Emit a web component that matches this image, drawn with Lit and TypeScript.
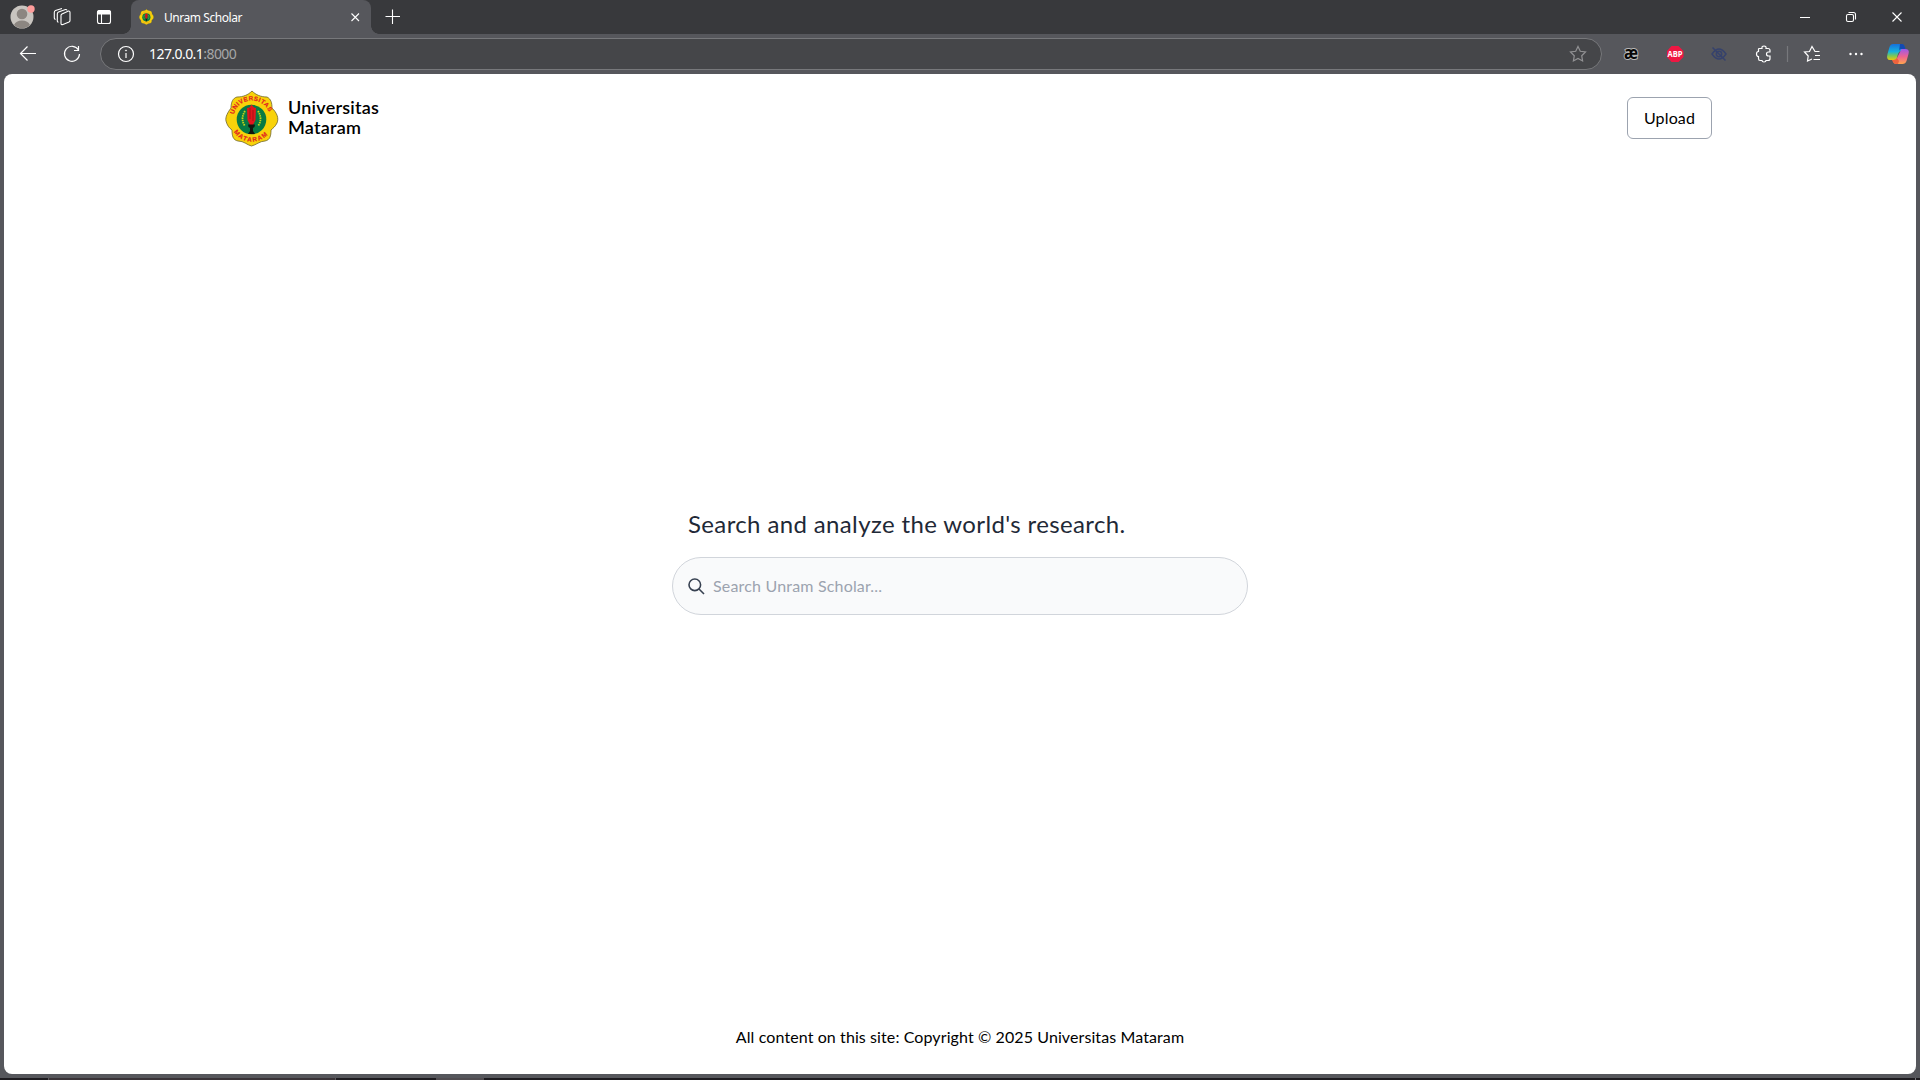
import { LitElement, html, css, svg } from "lit";
import { customElement } from "lit/decorators.js";

const emblem = (lettering: boolean) => svg`
  <path d="M27 1 C31 5 36 7 42 7 C46 9 47 13 47 18 C52 23 54 28 52 33 C50 37 48 38 46 40 C46 46 45 50 40 51 C35 51 31 55 26.500 56 C22 55 19 51 13 51 C8 50 7 46 7 40 C4 38 2 35 1 31 C0 27 3 22 6 18 C6 12 8 8 12 7 C18 7 23 5 27 1Z" fill="#f8d20a" stroke="#6d642b" stroke-width=".8"/>
  <circle cx="26.500" cy="29.500" r="14.800" fill="#087a43" stroke="none"/>
  <path d="M20 21 Q15 29 20 36 M33 21 Q38 29 33 36" fill="none" stroke="#c6d51b" stroke-width="1.800" stroke-dasharray="1.5 .8"/>
  <path d="M26.500 14.500 L29 17.500 L31 18 L30.500 30 L28 35 H25 L22.500 30 L22 18 L24.500 17.500Z" fill="#e3151d" stroke="none"/>
  <path d="M25 18 V29 M28 20 V31" stroke="#8a1513" stroke-width=".7"/>
  <path d="M23 34.500 H30 L29.500 37 L28 38 V41 L30 44 H23 L25 41 V38 L23.500 37Z" fill="#15150f" stroke="none"/>
  ${lettering ? svg`
    <path id="upper" d="M8.800 24.500 A18.500 18.500 0 0 1 44.700 24.500" fill="none"/>
    <path id="lower" d="M8.800 42 A21.500 21.500 0 0 0 44.800 42" fill="none"/>
    <text class="ring"><textPath href="#upper" textLength="46">UNIVERSITAS</textPath></text>
    <text class="ring"><textPath href="#lower" textLength="39">MATARAM</textPath></text>` : svg`
    <path d="M9 22 A19 19 0 0 1 44 22 M13 44 A20 20 0 0 0 40 44" fill="none" stroke="#e8981a" stroke-width="3" stroke-dasharray="3 1.500"/>`}
`;

@customElement("browser-tabs")
class BrowserTabs extends LitElement {
  static styles = css`
    :host { display: flex; height: 34px; background: #38393c; color: #fff; font: 12px "Noto Sans", "Open Sans", sans-serif; }
    svg { display: block; fill: none; stroke: #fff; stroke-width: 1.1; }
    .tools { width: 131px; }
    .tab { width: 240px; box-sizing: border-box; background: #56575c; border-radius: 8px 8px 0 0; display: flex; align-items: center; padding: 0 8px 0 8px; position: relative; }
    .tab::before, .tab::after { content: ""; position: absolute; bottom: 0; width: 8px; height: 8px; }
    .tab::before { left: -8px; background: radial-gradient(circle at 0 0, #38393c 7.500px, #56575c 8px); }
    .tab::after { right: -8px; background: radial-gradient(circle at 100% 0, #38393c 7.500px, #56575c 8px); }
    .title { flex: 1; padding-left: 10px; white-space: nowrap; letter-spacing: -.45px; }
    .windows { margin-left: auto; }
  `;
  render() {
    return html`
      <svg class="tools" viewBox="0 0 131 34" height="34">
        <circle cx="22" cy="17" r="11.500" fill="#c9c5c0" stroke="none"/>
        <circle cx="22" cy="14" r="5.300" fill="#8c8681" stroke="none"/>
        <path d="M14 25 Q16 20.500 22 20.500 Q28 20.500 30 25 Q26.500 28.300 22 28.300 Q17.500 28.300 14 25Z" fill="#8c8681" stroke="none"/>
        <circle cx="31" cy="9" r="3.700" fill="#ff9d9b" stroke="none"/>
        <path d="M61 15.500 Q61 14.500 62 14 L68.500 11 Q70 10.800 70 12.500 V20.500 Q70 21.500 69 22 L63 24.500 Q61 25 61 23.500Z"/>
        <path d="M58.500 22.300 Q57.300 22 57.300 21 V14 Q57.300 12.500 58.500 12 L65.500 9.500 Q66.700 9.200 67 10.500"/>
        <path d="M55.500 19.500 Q54.300 19 54.300 18 V12.500 Q54.300 11 55.500 10.500 L62 8.500"/>
        <rect x="97.500" y="10.500" width="13" height="13" rx="2"/>
        <path d="M97.500 14 V12.500 Q97.500 10.500 99.500 10.500 H108.500 Q110.500 10.500 110.500 12.500 V14Z" fill="#fff"/>
        <path d="M101.500 14 V23.500"/>
      </svg>
      <div class="tab">
        <svg width="15" height="16" viewBox="0 0 54 57">${emblem(false)}</svg>
        <span class="title">Unram Scholar</span>
        <svg width="15" height="16" viewBox="0 0 15 16"><path d="M3.500 4.500 L11 12 M11 4.500 L3.500 12"/></svg>
      </div>
      <svg width="40" height="34" viewBox="0 0 40 34"><path d="M14.500 16.500 H29 M21.500 9.500 V24"/></svg>
      <svg class="windows" width="140" height="34" viewBox="0 0 140 34">
        <path d="M20 17.500 H30 M112.500 12.500 L121.500 21.500 M121.500 12.500 L112.500 21.500"/>
        <rect x="66.500" y="14.500" width="7" height="7" rx="1.500"/>
        <path d="M68.500 12.500 H73.500 Q75.500 12.500 75.500 14.500 V19.500"/>
      </svg>`;
  }
}

@customElement("browser-toolbar")
class BrowserToolbar extends LitElement {
  static styles = css`
    :host { display: flex; height: 40px; background: #56575c; align-items: center; }
    svg { display: block; fill: none; stroke: #fff; stroke-width: 1.2; }
    .address { box-sizing: border-box; width: 1502px; height: 32px; border: 1px solid #77787b; border-radius: 16px; background: #454649; display: flex; align-items: center; }
    .url { font: 14px "Noto Sans", "Open Sans", sans-serif; color: #fff; letter-spacing: -.56px; padding: 0 0 1px 14px; flex: 1; }
    .port { color: #a6a6a8; }
    .ae { font: bold 17px "Open Sans", sans-serif; fill: #080808; stroke: #b8b8b8; stroke-width: 2; paint-order: stroke; }
    .abp { font: bold 8.500px "Open Sans", sans-serif; fill: #fff; stroke: none; }
  `;
  render() {
    return html`
      <svg width="100" height="40" viewBox="0 0 100 40">
        <path d="M20 19.500 H36 M27.500 12.500 L20.500 19.500 L27.500 26.500"/>
        <path d="M78.500 16 A7.500 7.500 0 1 0 79.500 20 M78.500 12 V16.500 H74"/>
      </svg>
      <div class="address">
        <svg width="34" height="30" viewBox="0 0 34 30">
          <circle cx="25" cy="15" r="7.500"/><path d="M25 14 V19"/><circle cx="25" cy="11.500" r=".6" fill="#fff" stroke-width=".6"/>
        </svg>
        <span class="url">127.0.0.1<span class="port">:8000</span></span>
        <svg width="40" height="30" viewBox="0 0 40 30"><path stroke="#929294" d="M17 7.500 L19.300 12.300 L24.500 13 L20.700 16.700 L21.600 22 L17 19.500 L12.400 22 L13.300 16.700 L9.500 13 L14.700 12.300Z"/></svg>
      </div>
      <svg width="318" height="40" viewBox="1602 34 318 40">
        <defs>
          <linearGradient id="cool" x1="0" y1="0" x2="0" y2="1"><stop offset="0" stop-color="#1570dc"/><stop offset=".48" stop-color="#16b3de"/><stop offset=".73" stop-color="#78c85b"/><stop offset="1" stop-color="#eac90a"/></linearGradient>
          <linearGradient id="warm" x1="0" y1="0" x2="0" y2="1"><stop offset="0" stop-color="#9b59eb"/><stop offset=".5" stop-color="#ed6392"/><stop offset="1" stop-color="#ffa44d"/></linearGradient>
        </defs>
        <text class="ae" x="1624" y="58.500" textLength="14" lengthAdjust="spacingAndGlyphs">æ</text>
        <path d="M1671.500 46 H1678.500 L1683.500 51 V57 L1678.500 62 H1671.500 L1667 57 V51Z" fill="#ee1743" stroke="none"/>
        <text class="abp" x="1667.500" y="57" textLength="15" lengthAdjust="spacingAndGlyphs">ABP</text>
        <g stroke="#36426c" stroke-width="1.500"><path d="M1712 54 Q1719 44 1726 54 Q1719 64 1712 54Z M1712.500 47.500 L1725.500 60.500"/><circle cx="1719" cy="54" r="2.700"/></g>
        <path d="M1759 48.500 H1762 Q1761.500 46 1764 46 Q1766.500 46 1766 48.500 H1768 Q1770 48.500 1770 50.500 V52 H1768.500 Q1766.500 52 1766.500 54 Q1766.500 56 1768.500 56 H1770 V58.500 Q1770 60.500 1768 60.500 H1766 Q1766 62 1764 62 Q1762 62 1762 60.500 H1760 Q1758.500 60.500 1758.500 58.500 V56.500 Q1756.500 56.500 1756.500 54 Q1756.500 51.500 1758.500 51.500 V49Z"/>
        <path d="M1787.500 46 V62" stroke="#77787c"/>
        <path d="M1819.500 51.500 H1815 L1812 46.500 L1809.500 51.500 L1804.500 52 L1808.200 56 L1807.500 61 L1812 59 M1815 55.500 H1820 M1813.500 59.500 H1820"/>
        <g fill="#fff" stroke="none"><circle cx="1850.500" cy="54" r="1.200"/><circle cx="1856" cy="54" r="1.200"/><circle cx="1861.500" cy="54" r="1.200"/></g>
        <g stroke="none">
          <path d="M1893 44 H1901 Q1904 44 1905 48 L1906 51 H1901 Q1899 51 1898 54 L1896.500 59 Q1896 60 1894 60 H1890 Q1886 60 1887.500 54 L1889.500 47 Q1890.500 44 1893 44Z" fill="url(#cool)"/>
          <path d="M1900 44 H1902 Q1904.500 44 1905.500 49 H1901 Q1899.500 49 1899 51Z" fill="#134ab2"/>
          <path d="M1901.500 49 H1905 Q1910 49 1908.500 54 L1906.500 61 Q1905.500 64 1902.500 64 H1896 Q1893.500 64 1892.500 60 H1894 Q1896.500 60 1897.500 57Z" fill="url(#warm)"/>
          <path d="M1892 60 H1894 Q1896 60 1897 58 L1899 61 L1898 64 H1896 Q1893.500 64 1892 60Z" fill="#ee633d"/>
        </g>
      </svg>`;
  }
}

@customElement("app-root")
class AppRoot extends LitElement {
  static styles = css`
    :host { display: flex; flex-direction: column; width: 1920px; height: 1080px; background: #56575c; overflow: hidden; font-family: Lato, "Open Sans", sans-serif; }
    .page { box-sizing: border-box; height: 1000px; margin: 0 4px; background: #fff; border-radius: 8px; display: flex; flex-direction: column; color: #000; }
    header { height: 88px; padding: 0 204px 0 221px; display: flex; align-items: center; justify-content: space-between; }
    .brand { display: flex; align-items: center; gap: 9px; }
    .brand svg { display: block; }
    .ring { font: bold 6.200px "Liberation Sans", sans-serif; fill: #e22420; stroke: #e22420; stroke-width: .2; }
    .name { font-size: 18px; line-height: 20px; font-weight: 600; letter-spacing: .23px; padding-bottom: 2px; }
    .upload { box-sizing: border-box; width: 85px; height: 42px; border: 1px solid #9ca3af; border-radius: 6px; background: #fff; padding: 0 0 2px; color: #000; font: 16px Lato, sans-serif; letter-spacing: .15px; }
    main { flex: 1; display: flex; flex-direction: column; align-items: center; padding-top: 346px; }
    .finder { width: 576px; }
    h1 { margin: 0; padding-left: 16px; font-size: 24px; line-height: 32px; font-weight: 400; color: #1f2937; letter-spacing: .37px; white-space: nowrap; }
    .search { box-sizing: border-box; height: 58px; margin-top: 17px; border: 1px solid #d1d5db; border-radius: 29px; background: #f9fafb; display: flex; align-items: center; padding-left: 15px; gap: 8px; }
    .search svg { display: block; fill: none; stroke: #374151; stroke-width: 1.6; }
    .hint { font-size: 16px; color: #9ca3af; letter-spacing: .18px; padding-bottom: 2px; }
    footer { height: 49px; line-height: 24px; text-align: center; font-size: 16px; letter-spacing: .1px; }
    .taskbar { height: 2px; margin-top: 4px; background: #1d1b1f; display: flex; }
    .active { box-sizing: border-box; margin-left: 48px; width: 288px; border: solid #5a575a; border-width: 0 1px; background: #393337; }
    .window { margin-left: 100px; width: 48px; background: #504c50; }
    .edge { margin-left: auto; margin-right: 4px; width: 1px; background: #77767a; }
  `;
  render() {
    return html`
      <browser-tabs></browser-tabs>
      <browser-toolbar></browser-toolbar>
      <div class="page">
        <header>
          <div class="brand">
            <svg width="54" height="57" viewBox="0 0 54 57">${emblem(true)}</svg>
            <div class="name">Universitas<br>Mataram</div>
          </div>
          <button class="upload">Upload</button>
        </header>
        <main>
          <div class="finder">
            <h1>Search and analyze the world's research.</h1>
            <div class="search">
              <svg width="17" height="17" viewBox="0 0 17 17"><circle cx="6.800" cy="6.800" r="5.800"/><path d="M11 11 L16 16"/></svg>
              <span class="hint">Search Unram Scholar...</span>
            </div>
          </div>
        </main>
        <footer>All content on this site: Copyright © 2025 Universitas Mataram</footer>
      </div>
      <div class="taskbar"><span class="active"></span><span class="window"></span><span class="edge"></span></div>`;
  }
}
